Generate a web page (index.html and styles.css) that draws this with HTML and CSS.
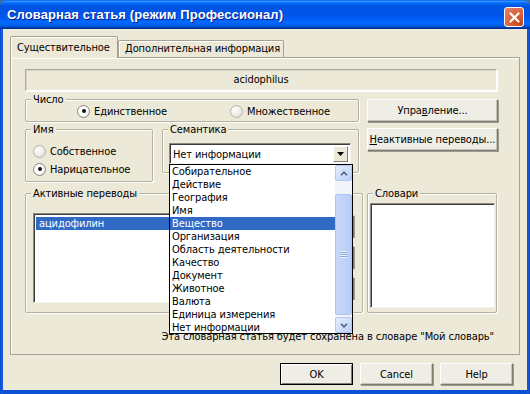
FILE: index.html
```
<!DOCTYPE html>
<html lang="ru">
<head>
<meta charset="utf-8">
<title>Словарная статья</title>
<link rel="stylesheet" href="styles.css">
</head>
<body>
<div class="window">
  <div class="titlebar">
    <span class="title">Словарная статья (режим Профессионал)</span>
    <span class="close"><svg width="11" height="11" viewBox="0 0 11 11"><path d="M1.5 1.5 L9.5 9.5 M9.5 1.5 L1.5 9.5" stroke="#fff" stroke-width="2.2" stroke-linecap="round"/></svg></span>
  </div>
  <div class="client">
    <div class="tabs">
      <div class="tab active">Существительное</div>
      <div class="tab">Дополнительная информация</div>
    </div>
    <div class="panel">
      <div class="word">acidophilus</div>
      <div class="mid">
        <div class="mid-left">
          <div class="grp grp-number">
            <span class="legend">Число</span>
            <label class="opt opt-first"><span class="radio checked"></span>Единственное</label>
            <label class="opt"><span class="radio"></span>Множественное</label>
          </div>
          <div class="row2">
            <div class="grp grp-name">
              <span class="legend">Имя</span>
              <label class="opt"><span class="radio"></span>Собственное</label>
              <label class="opt"><span class="radio checked"></span>Нарицательное</label>
            </div>
            <div class="grp grp-sem">
              <span class="legend">Семантика</span>
              <div class="combo">
                <span class="combo-text">Нет информации</span>
                <span class="combo-btn"><svg width="7" height="4" viewBox="0 0 7 4"><path d="M0 0 H7 L3.5 4 Z" fill="#000"/></svg></span>
                <div class="droplist">
                  <ul class="items">
                    <li>Собирательное</li>
                    <li>Действие</li>
                    <li>География</li>
                    <li>Имя</li>
                    <li class="sel">Вещество</li>
                    <li>Организация</li>
                    <li>Область деятельности</li>
                    <li>Качество</li>
                    <li>Документ</li>
                    <li>Животное</li>
                    <li>Валюта</li>
                    <li>Единица измерения</li>
                    <li>Нет информации</li>
                  </ul>
                  <div class="vscroll">
                    <span class="sb-btn"><svg width="8" height="5" viewBox="0 0 8 5"><path d="M1 4.2 L4 1.2 L7 4.2" stroke="#4d6185" stroke-width="1.6" fill="none"/></svg></span>
                    <div class="sb-track">
                      <div class="sb-thumb"><span class="grip"></span></div>
                    </div>
                    <span class="sb-btn"><svg width="8" height="5" viewBox="0 0 8 5"><path d="M1 0.8 L4 3.8 L7 0.8" stroke="#4d6185" stroke-width="1.6" fill="none"/></svg></span>
                  </div>
                </div>
              </div>
            </div>
          </div>
        </div>
        <div class="mid-right">
          <button class="btn">Упра<u>в</u>ление...</button>
          <button class="btn"><u>Н</u>еактивные переводы...</button>
        </div>
      </div>
      <div class="lower">
        <div class="grp grp-active">
          <span class="legend">Активные переводы</span>
          <div class="listbox list-active">
            <div class="list-item sel">ацидофилин</div>
          </div>
          <div class="side-btns">
            <button class="btn small"></button>
            <button class="btn small"></button>
            <button class="btn small"></button>
          </div>
        </div>
        <div class="grp grp-dict">
          <span class="legend">Словари</span>
          <div class="listbox list-dict"></div>
        </div>
      </div>
      <div class="note">Эта словарная статья будет сохранена в словаре "Мой словарь"</div>
    </div>
    <div class="footer">
      <button class="btn default">OK</button>
      <button class="btn">Cancel</button>
      <button class="btn">Help</button>
    </div>
  </div>
</div>
</body>
</html>
```
FILE: styles.css
```
html, body {
  margin: 0;
  padding: 0;
  background: #3a6ea5;
}
body {
  width: 530px;
  height: 394px;
  overflow: hidden;
  font-family: "DejaVu Sans Condensed", "DejaVu Sans", "Noto Sans", sans-serif;
  font-stretch: semi-condensed;
  font-size: 11px;
  letter-spacing: -0.1px;
  color: #000;
}
.window {
  width: 530px;
  height: 394px;
  box-sizing: border-box;
  display: flex;
  flex-direction: column;
  background: linear-gradient(to right, #0a47c8 0, #1a5fe0 2px, #0c50d6 3px, #0c50d6 527px, #1a5fe0 528px, #0a3fb8 530px);
  border-radius: 7px 7px 0 0;
  overflow: hidden;
}
.titlebar {
  height: 29px;
  flex: none;
  display: flex;
  align-items: flex-start;
  justify-content: space-between;
  padding: 0 6px 0 7px;
  background: linear-gradient(to bottom, #0058ee 0%, #3593ff 4%, #288eff 6%, #127dff 8%, #036ffc 10%, #0262ee 14%, #0057e5 20%, #0054e3 24%, #0055eb 56%, #005bf5 66%, #026afe 76%, #0062ef 86%, #0052d6 92%, #0040ab 94%, #003092 100%);
}
.title {
  margin-top: 7px;
  color: #fff;
  font-family: "Liberation Sans", Arial, sans-serif;
  font-stretch: normal;
  font-weight: bold;
  font-size: 13px;
  letter-spacing: 0.1px;
  line-height: 16px;
  text-shadow: 1px 1px 0 #0a1f8a;
}
.close {
  margin-top: 7px;
  width: 20px;
  height: 20px;
  box-sizing: border-box;
  border: 1px solid #fff;
  border-radius: 3px;
  background: radial-gradient(circle at 85% 85%, #cc4418 0%, #dc6843 55%, #e6846a 100%);
  display: flex;
  align-items: center;
  justify-content: center;
}
.client {
  flex: 1;
  margin: 0 3px 4px;
  padding: 7px 7px 0 7px;
  background: #ece9d8;
  display: flex;
  flex-direction: column;
}
.tabs {
  display: flex;
  align-items: flex-end;
  height: 21px;
  position: relative;
  z-index: 2;
}
.tab {
  box-sizing: border-box;
  height: 17px;
  padding: 0 5px 0 6px;
  line-height: 16px;
  border: 1px solid #a5a294;
  border-bottom: none;
  border-radius: 2px 2px 0 0;
  background: #ece9d8;
  box-shadow: inset 1px 1px 0 #fff;
  white-space: nowrap;
}
.tab.active {
  height: 22px;
  margin-bottom: -1px;
  width: 108px;
  padding-top: 2px;
  line-height: 18px;
}
.tab:not(.active) {
  width: 166px;
}
.panel {
  box-sizing: border-box;
  height: 298px;
  border: 1px solid #a5a294;
  box-shadow: inset 1px 1px 0 #fff;
  padding: 11px 22px 0 14px;
  display: flex;
  flex-direction: column;
  align-items: flex-start;
}
.word {
  box-sizing: border-box;
  width: 472px;
  height: 22px;
  border: 1px solid;
  border-color: #a9a79b #ffffff #ffffff #a9a79b;
  box-shadow: inset 1px 1px 0 #d7d4c6, 1px 1px 0 #fff;
  text-align: center;
  line-height: 20px;
}
.mid {
  display: flex;
  gap: 8px;
  margin-top: 8px;
}
.mid-left {
  width: 334px;
  display: flex;
  flex-direction: column;
}
.mid-right {
  width: 131px;
  display: flex;
  flex-direction: column;
  gap: 6px;
}
.grp {
  position: relative;
  box-sizing: border-box;
  border: 1px solid #b4b1a3;
  border-radius: 2px;
  box-shadow: inset 1px 1px 0 #fff, 1px 1px 0 #fff;
}
.legend {
  position: absolute;
  top: -7px;
  left: 5px;
  padding: 0 2px;
  line-height: 13px;
  background: #ece9d8;
  white-space: nowrap;
}
.grp-number {
  height: 23px;
  display: flex;
  align-items: center;
  padding: 1px 0 0 51px;
}
.opt {
  display: flex;
  align-items: center;
  gap: 4px;
  white-space: nowrap;
  line-height: 13px;
}
.opt-first {
  width: 153px;
}
.radio {
  flex: none;
  position: relative;
  width: 13px;
  height: 13px;
  box-sizing: border-box;
  border-radius: 50%;
  border: 1px solid #b6b4aa;
  background: radial-gradient(circle at 35% 35%, #ffffff 0%, #f1f0ea 45%, #d6d4c9 100%);
}
.radio.checked {
  border-color: #8a887e;
  background: radial-gradient(circle at 35% 35%, #ffffff 0%, #fafaf6 55%, #dcdad0 100%);
}
.radio.checked::after {
  content: "";
  position: absolute;
  left: 3.5px;
  top: 3.5px;
  width: 4px;
  height: 4px;
  border-radius: 50%;
  background: #111;
}
.row2 {
  display: flex;
  gap: 9px;
  margin-top: 7px;
  align-items: flex-start;
}
.grp-name {
  width: 128px;
  height: 53px;
  padding: 12px 0 0 7px;
  display: flex;
  flex-direction: column;
}
.grp-name .opt {
  height: 18px;
}
.grp-sem {
  width: 197px;
  height: 44px;
  padding: 13px 0 0 6px;
}
.combo {
  position: relative;
  box-sizing: border-box;
  width: 182px;
  height: 21px;
  background: #fff;
  border: 1px solid;
  border-color: #8c8a80 #f4f3ee #f4f3ee #8c8a80;
  box-shadow: inset 1px 1px 0 #3c3c3c;
  display: flex;
  align-items: center;
  justify-content: space-between;
  padding: 0 2px 0 3px;
}
.combo-text {
  line-height: 13px;
  padding-top: 1px;
}
.combo-btn {
  box-sizing: border-box;
  width: 15px;
  height: 16px;
  margin-top: 1px;
  border: 1px solid;
  border-color: #fff #807e74 #807e74 #fff;
  background: #ece9d8;
  display: flex;
  align-items: center;
  justify-content: center;
}
.droplist {
  position: absolute;
  left: -1px;
  top: 20px;
  z-index: 10;
  box-sizing: border-box;
  width: 184px;
  height: 170px;
  border: 1px solid #000;
  background: #fff;
  display: flex;
}
.items {
  list-style: none;
  margin: 0;
  padding: 0;
  flex: 1;
}
.items li {
  height: 13px;
  line-height: 13px;
  padding-left: 2px;
  white-space: nowrap;
  overflow: hidden;
}
.items li.sel {
  background: #316ac5;
  color: #fff;
}
.vscroll {
  width: 17px;
  display: flex;
  flex-direction: column;
  background: #f1f4fb;
}
.sb-btn {
  box-sizing: border-box;
  height: 16px;
  border: 1px solid #b4c8f6;
  border-radius: 2px;
  background: linear-gradient(to bottom right, #e6eefc, #bcd0f8);
  display: flex;
  align-items: center;
  justify-content: center;
}
.sb-track {
  flex: 1;
  padding: 13px 0 2px;
  display: flex;
}
.sb-thumb {
  flex: 1;
  box-sizing: border-box;
  border: 1px solid #aec4f3;
  border-radius: 2px;
  background: linear-gradient(to right, #c9d8fa, #b8cdf7);
  display: flex;
  align-items: center;
  justify-content: center;
}
.grip {
  width: 7px;
  height: 7px;
  background: repeating-linear-gradient(to bottom, #eef3fe 0, #eef3fe 1px, #8aa6e0 1px, #8aa6e0 2px);
}
.btn {
  box-sizing: border-box;
  font: inherit;
  letter-spacing: inherit;
  color: #000;
  height: 23px;
  padding: 0;
  border: 1px solid;
  border-color: #fff #7d7b72 #7d7b72 #fff;
  box-shadow: inset -1px -1px 0 #c6c3b4, 1px 1px 0 #9d9b90;
  background: #efeee6;
  text-align: center;
  white-space: nowrap;
}
.btn u {
  text-decoration: underline;
}
.mid-right .btn {
  width: 131px;
}
.lower {
  display: flex;
  gap: 4px;
  margin-top: 11px;
}
.grp-active {
  width: 338px;
  height: 120px;
  display: flex;
  justify-content: space-between;
  padding: 19px 8px 0 7px;
}
.listbox {
  box-sizing: border-box;
  background: #fff;
  border: 1px solid;
  border-color: #8c8a80 #f4f3ee #f4f3ee #8c8a80;
  box-shadow: inset 1px 1px 0 #3c3c3c;
}
.list-active {
  width: 262px;
  height: 90px;
  padding: 3px 0 0 2px;
}
.list-item {
  height: 13px;
  line-height: 13px;
  padding-left: 3px;
}
.list-item.sel {
  background: #316ac5;
  color: #fff;
}
.side-btns {
  display: flex;
  flex-direction: column;
  gap: 9px;
  padding-top: 2px;
}
.btn.small {
  width: 55px;
  height: 22px;
}
.grp-dict {
  width: 130px;
  height: 120px;
  padding: 9px 1px 4px 2px;
  display: flex;
}
.list-dict {
  flex: 1;
}
.note {
  align-self: stretch;
  margin-top: 17px;
  padding-right: 3px;
  text-align: right;
  line-height: 13px;
  white-space: nowrap;
}
.footer {
  display: flex;
  justify-content: flex-end;
  gap: 7px;
  margin-top: 8px;
  padding-right: 7px;
}
.footer .btn {
  width: 73px;
  height: 22px;
}
.btn.default {
  border-color: #000;
  box-shadow: inset 1px 1px 0 #fff, inset -1px -1px 0 #7d7b72;
}
```
